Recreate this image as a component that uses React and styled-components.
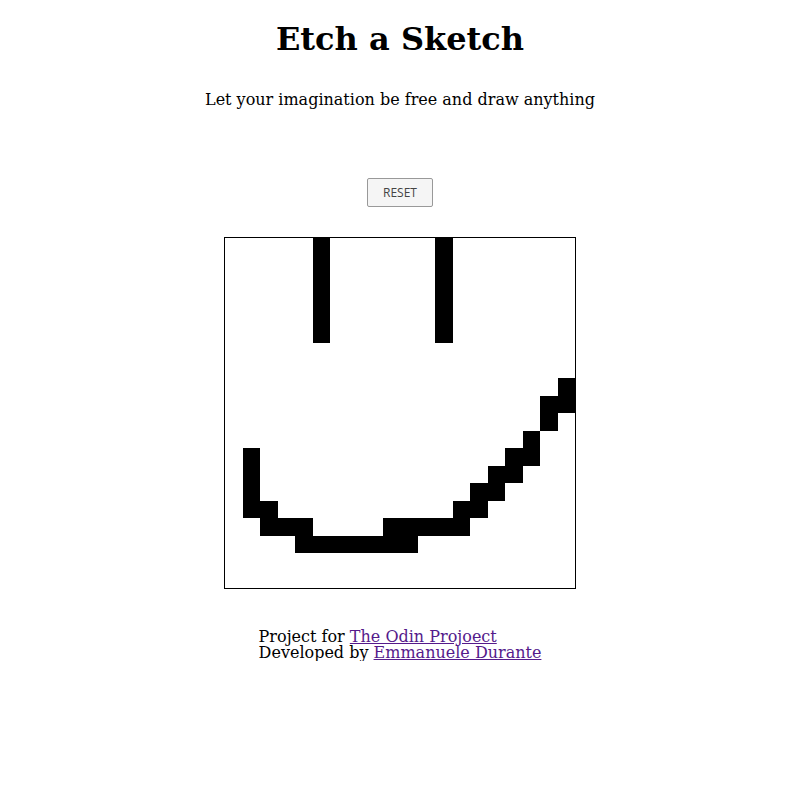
import { createGlobalStyle, styled } from "styled-components";

const GlobalStyle = createGlobalStyle`
  body {
    margin: 8px;
    font-family: "DejaVu Serif", serif;
    color: #000;
    background: #fff;
  }
`;

const Page = styled.main`
  display: flex;
  flex-direction: column;
  align-items: center;
`;

const Title = styled.h1`
  font-size: 2em;
  font-weight: bold;
  margin: 12px 0 0;
`;

const Subtitle = styled.p`
  font-size: 16px;
  margin: 32px 0 0;
`;

const Controls = styled.div`
  margin-top: 69px;
`;

const ResetButton = styled.button`
  font-family: "Open Sans", sans-serif;
  font-size: 12px;
  color: #444;
  background: #f5f5f5;
  border: 1px solid #999;
  border-radius: 2px;
  padding: 5px 15px;
  cursor: pointer;
`;

const Board = styled.div`
  margin-top: 30px;
  width: 350px;
  height: 350px;
  border: 1px solid #000;
  display: grid;
  grid-template-columns: repeat(20, 1fr);
  grid-template-rows: repeat(20, 1fr);
`;

const Cell = styled.div`
  background: ${(props) => (props.$painted ? "#000" : "#fff")};
`;

const Footer = styled.footer`
  margin-top: 40px;
  font-size: 16px;
  line-height: 16px;

  a {
    color: #551a8b;
  }
`;

// painted cells, row -> columns
const drawing = {
  0: [5, 12],
  1: [5, 12],
  2: [5, 12],
  3: [5, 12],
  4: [5, 12],
  5: [5, 12],
  8: [19],
  9: [18, 19],
  10: [18],
  11: [17],
  12: [1, 16, 17],
  13: [1, 15, 16],
  14: [1, 14, 15],
  15: [1, 2, 13, 14],
  16: [2, 3, 4, 9, 10, 11, 12, 13],
  17: [4, 5, 6, 7, 8, 9, 10],
};

const cells = [];
for (let r = 0; r < 20; r++) {
  for (let c = 0; c < 20; c++) {
    cells.push({ key: `${r}-${c}`, painted: (drawing[r] || []).includes(c) });
  }
}

export default function App() {
  return (
    <Page>
      <GlobalStyle />
      <Title>Etch a Sketch</Title>
      <Subtitle>Let your imagination be free and draw anything</Subtitle>
      <Controls>
        <ResetButton>RESET</ResetButton>
      </Controls>
      <Board>
        {cells.map((cell) => (
          <Cell key={cell.key} $painted={cell.painted} />
        ))}
      </Board>
      <Footer>
        <div>
          Project for <a href="#">The Odin Projoect</a>
        </div>
        <div>
          Developed by <a href="#">Emmanuele Durante</a>
        </div>
      </Footer>
    </Page>
  );
}
